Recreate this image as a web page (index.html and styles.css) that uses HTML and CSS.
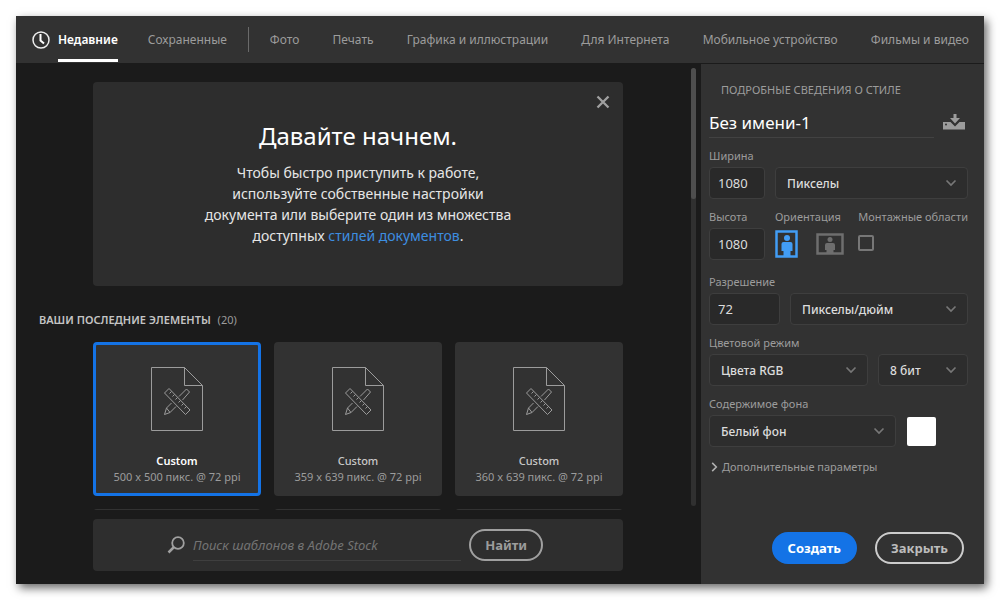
FILE: index.html
```html
<!DOCTYPE html>
<html lang="ru">
<head>
<meta charset="utf-8">
<title>Новый документ</title>
<link rel="stylesheet" href="styles.css">
</head>
<body>
<svg class="sprite" aria-hidden="true">
  <symbol id="chevron" viewBox="0 0 12 8"><path d="M1.500 1.500 6 6l4.500-4.500" fill="none" stroke="currentColor" stroke-width="1.700"/></symbol>
  <symbol id="custom-doc" viewBox="0 0 52 64">
    <g fill="none" stroke="currentColor">
      <path d="M.5 .5H33.500L51.500 18.500V63.500H.5Z M33.500 .5V18.500H51.500"/>
      <path d="M20.500 36 15.500 41 13.500 47.500 19 45.500 25 39.500 M28 29.500 35.500 22 38.500 25 31.500 33 M15.500 41 19 45.500"/>
      <path d="M18 21.500 39 43 34.500 47.500 13.500 26Z M20.500 24.500 18.500 26.500 M23.500 27.500 21.500 29.500 M26.500 30.500 24.500 32.500 M29.500 33.500 27.500 35.500 M32.500 36.500 30.500 38.500 M35.500 39.500 33.500 41.500"/>
    </g>
  </symbol>
</svg>

<div class="window">
  <header class="topbar">
    <svg class="clock" viewBox="0 0 18 18" aria-hidden="true"><circle cx="9" cy="9" r="8" fill="none" stroke="#eee" stroke-width="1.500"/><path d="M8.500 3V9.500L12 12.500" fill="none" stroke="#fff" stroke-width="2"/></svg>
    <nav class="tabs">
      <div class="tab-group">
        <a class="tab active" href="#recent">Недавние</a>
        <a class="tab" href="#saved">Сохраненные</a>
      </div>
      <div class="tab-group presets">
        <a class="tab" href="#photo">Фото</a>
        <a class="tab" href="#print">Печать</a>
        <a class="tab" href="#art">Графика и иллюстрации</a>
        <a class="tab" href="#web">Для Интернета</a>
        <a class="tab" href="#mobile">Мобильное устройство</a>
        <a class="tab" href="#film">Фильмы и видео</a>
      </div>
    </nav>
  </header>

  <div class="body">
    <main class="main">
      <div class="scroll-row">
        <div class="scroll-content">
          <section class="welcome">
            <button class="close" type="button" aria-label="Скрыть"><svg viewBox="0 0 14 14"><path d="M1.500 1.500 12.500 12.500M12.500 1.500 1.500 12.500" stroke="currentColor" stroke-width="2.300"/></svg></button>
            <h1>Давайте начнем.</h1>
            <p>Чтобы быстро приступить к работе,<br>используйте собственные настройки<br>документа или выберите один из множества<br>доступных <a href="#styles">стилей документов</a>.</p>
          </section>
          <h2 class="recent-title">ВАШИ ПОСЛЕДНИЕ ЭЛЕМЕНТЫ <span>(20)</span></h2>
          <div class="cards">
            <button type="button" class="card selected"><svg><use href="#custom-doc"/></svg><strong>Custom</strong><span>500 x 500 пикс. @ 72 ppi</span></button>
            <button type="button" class="card"><svg><use href="#custom-doc"/></svg><strong>Custom</strong><span>359 x 639 пикс. @ 72 ppi</span></button>
            <button type="button" class="card"><svg><use href="#custom-doc"/></svg><strong>Custom</strong><span>360 x 639 пикс. @ 72 ppi</span></button>
            <div class="card next"></div><div class="card next"></div><div class="card next"></div>
          </div>
        </div>
        <div class="scrollbar"><div class="thumb"></div></div>
      </div>
      <form class="search">
        <svg viewBox="0 0 18 18" aria-hidden="true"><circle cx="11" cy="7" r="5.800" fill="none" stroke="currentColor" stroke-width="1.800"/><path d="M7 11 1.500 16.500" stroke="currentColor" stroke-width="2.500"/></svg>
        <input type="text" placeholder="Поиск шаблонов в Adobe Stock" aria-label="Поиск шаблонов в Adobe Stock">
        <button type="button" class="pill">Найти</button>
      </form>
    </main>

    <aside class="details">
      <h2>ПОДРОБНЫЕ СВЕДЕНИЯ О СТИЛЕ</h2>
      <div class="name-row">
        <input type="text" value="Без имени-1" aria-label="Имя">
        <button type="button" class="save" aria-label="Сохранить стиль"><svg viewBox="0 0 22 16"><path d="M0 8H7.500L12 12.500 16.500 8H22V15.500H0Z" fill="currentColor"/><path d="M10.500 0h3v4H17l-5 5.500L7 4h3.500Z" fill="currentColor"/><circle cx="3" cy="10.500" r="1" fill="#323232"/></svg></button>
      </div>

      <div class="row size">
        <div class="field"><label for="width">Ширина</label><input id="width" type="text" value="1080"></div>
        <div class="field grow"><div class="select"><select aria-label="Единицы"><option>Пикселы</option></select><svg><use href="#chevron"/></svg></div></div>
      </div>

      <div class="row size second">
        <div class="field"><label for="height">Высота</label><input id="height" type="text" value="1080"></div>
        <div class="field orientation">
          <span class="label">Ориентация</span>
          <div class="orient">
            <button type="button" class="on" aria-label="Книжная"><svg width="24" height="28" viewBox="0 0 24 28"><rect x="1.500" y="1.500" width="20" height="25" fill="none" stroke="currentColor" stroke-width="2.500"/><circle cx="12" cy="8" r="3" fill="currentColor"/><path d="M8.500 12h7q2 0 2 2v7H15.500v5h-7v-5H6.500v-7q0-2 2-2Z" fill="currentColor"/></svg></button>
            <button type="button" aria-label="Альбомная"><svg width="28" height="22" viewBox="0 0 28 22"><rect x="1.500" y="1.500" width="25" height="19" fill="none" stroke="currentColor" stroke-width="2.500"/><circle cx="14" cy="6.500" r="2.500" fill="currentColor"/><path d="M11 10h6q2 0 2 2v5H17.500v4h-7v-4H9v-5q0-2 2-2Z" fill="currentColor"/></svg></button>
          </div>
        </div>
        <div class="field"><label for="artboards">Монтажные области</label><div class="check"><input id="artboards" type="checkbox"></div></div>
      </div>

      <div class="row resolution">
        <div class="field"><label for="res">Разрешение</label><input id="res" type="text" value="72"></div>
        <div class="field grow"><div class="select"><select aria-label="Единицы разрешения"><option>Пикселы/дюйм</option></select><svg><use href="#chevron"/></svg></div></div>
      </div>

      <div class="row">
        <div class="field grow"><label for="mode">Цветовой режим</label><div class="select"><select id="mode"><option>Цвета RGB</option></select><svg><use href="#chevron"/></svg></div></div>
        <div class="field depth"><div class="select"><select aria-label="Глубина цвета"><option>8 бит</option></select><svg><use href="#chevron"/></svg></div></div>
      </div>

      <div class="row background">
        <div class="field grow"><label for="bg">Содержимое фона</label><div class="select"><select id="bg"><option>Белый фон</option></select><svg><use href="#chevron"/></svg></div></div>
        <button type="button" class="swatch" aria-label="Цвет фона"></button>
      </div>

      <button type="button" class="more"><svg><use href="#chevron"/></svg>Дополнительные параметры</button>

      <div class="actions">
        <button type="button" class="pill primary">Создать</button>
        <button type="button" class="pill">Закрыть</button>
      </div>
    </aside>
  </div>
</div>
</body>
</html>
```
FILE: styles.css
```css
* { box-sizing: border-box; }

body {
  margin: 0;
  padding: 16px;
  background: #fff;
  color: #9c9c9c;
  font-family: "Noto Sans", sans-serif;
  font-size: 12px;
  line-height: 16px;
}

button, input, select { font: inherit; color: inherit; margin: 0; }
button { padding: 0; border: 0; background: none; cursor: pointer; }
a { text-decoration: none; }
.sprite { display: none; }

.window {
  display: flex;
  flex-direction: column;
  height: calc(100vh - 32px);
  background: #1b1b1b;
  box-shadow: 3px 4px 9px rgba(0, 0, 0, 0.6);
}

/* Top bar */
.topbar {
  display: flex;
  align-items: center;
  gap: 8px;
  height: 47px;
  flex: none;
  margin-bottom: 1px;
  padding: 0 15px 0 16px;
  background: #323232;
}
.clock { width: 18px; height: 18px; flex: none; }
.tabs { display: flex; align-items: center; gap: 21px; flex: 1; align-self: stretch; }
.tab-group { display: flex; align-items: center; gap: 30px; height: 100%; }
.presets {
  flex: 1;
  justify-content: space-between;
  gap: 0;
  height: 25px;
  padding-left: 21px;
  border-left: 1px solid #6a6a6a;
}
.tab { padding-top: 1px; color: #9c9c9c; white-space: nowrap; }
.tab.active {
  display: flex;
  align-items: center;
  height: 100%;
  color: #fff;
  font-weight: 600;
  box-shadow: inset 0 -1px #323232, inset 0 -4px #fff;
}

.body { display: flex; flex: 1; min-height: 0; }

/* Main column */
.main { display: flex; flex-direction: column; flex: 1; min-width: 0; padding: 4px 5px 13px 23px; }
.scroll-row { display: flex; flex: 1; min-height: 0; }
.scroll-content {
  flex: 1;
  height: calc(100% + 4px);
  overflow: hidden;
  padding: 14px 68px 0 0;
}
.scrollbar { width: 5px; border-radius: 3px; background: #303030; }
.thumb { height: 30%; border-radius: 3px; background: #4e4e4e; }

.welcome {
  position: relative;
  margin-left: 54px;
  padding: 38px 0 40px;
  border-radius: 4px;
  background: #2d2d2d;
  color: #e6e6e6;
  text-align: center;
}
.welcome h1 { margin: 0 0 10px; color: #fff; font-size: 24px; font-weight: 400; line-height: 32px; }
.welcome p { margin: 0; font-size: 14px; line-height: 21px; }
.welcome a { color: #3d8ee0; }
.close { position: absolute; top: 13px; right: 13px; width: 14px; height: 14px; color: #a0a0a0; }
.close svg { display: block; }

.recent-title { margin: 26px 0 14px; color: #c4c4c4; font-size: 11px; font-weight: 600; line-height: 16px; }
.recent-title span { margin-left: 4px; color: #9c9c9c; font-weight: 400; }

.cards { display: grid; grid-template-columns: repeat(3, 1fr); gap: 13px; margin-left: 54px; }
.card {
  display: flex;
  flex-direction: column;
  align-items: center;
  height: 154px;
  padding: 22px 0 0;
  border: 3px solid #323232;
  border-radius: 4px;
  background: #323232;
  font-size: 11px;
}
.card svg { width: 52px; height: 64px; margin-bottom: 22px; }
.card strong { color: #c8c8c8; font-weight: 500; }
.card.selected { border-color: #1473e6; }
.card.selected strong { color: #fff; font-weight: 600; }

.search {
  display: flex;
  align-items: center;
  height: 52px;
  flex: none;
  margin: 13px 73px 0 54px;
  padding: 0 80px 0 74px;
  border-radius: 4px;
  background: #2e2e2e;
}
.search svg { width: 18px; height: 18px; flex: none; color: #a0a0a0; }
.search input {
  flex: 1;
  min-width: 0;
  height: 32px;
  margin: 0 8px;
  padding: 0;
  border: 0;
  border-bottom: 1px solid #3f3f3f;
  background: none;
  font-size: 13px;
  font-style: italic;
}
.search input::placeholder { color: #747474; opacity: 1; }

.pill {
  height: 32px;
  padding: 0 14px;
  border: 2px solid #a0a0a0;
  border-radius: 16px;
  font-size: 13px;
  font-weight: 700;
}

/* Details panel */
.details { display: flex; flex-direction: column; width: 283px; flex: none; padding: 18px 16px 20px 8px; background: #323232; }
.details h2 { margin: 0 12px 12px; font-size: 11px; font-weight: 400; line-height: 16px; }
.name-row { display: flex; gap: 9px; margin-bottom: 10px; }
.name-row input {
  flex: 1;
  min-width: 0;
  height: 28px;
  padding: 0 0 2px;
  border: 0;
  border-bottom: 1px solid #424242;
  background: none;
  color: #fff;
  font-size: 17px;
}
.save { width: 22px; height: 16px; margin: 4px 3px 0 0; }
.save svg { display: block; }

.row { display: flex; align-items: flex-end; gap: 10px; margin-bottom: 10px; }
.field { display: flex; flex-direction: column; gap: 3px; font-size: 11px; }
.field label, .field .label { white-space: nowrap; }
.grow { flex: 1; min-width: 0; }
.field input[type="text"], .select {
  height: 32px;
  border: 1px solid #3e3e3e;
  border-radius: 4px;
  background: #292929;
  color: #dcdcdc;
  font-size: 13px;
}
.field input[type="text"] { width: 56px; padding: 0 8px; }
.resolution input[type="text"] { width: 71px; }
.second { margin-bottom: 14px; }
.depth { width: 90px; }

.select { display: grid; align-items: center; background: #2d2d2d; font-size: 12px; font-weight: 500; }
.select > * { grid-area: 1 / 1; }
.select select { width: 100%; height: 100%; padding: 1px 30px 0 11px; border: 0; background: none; appearance: none; }
.select svg { justify-self: end; width: 12px; height: 8px; margin-right: 10px; color: #777; pointer-events: none; }

.orientation { width: 74px; }
.orient { display: flex; align-items: center; gap: 17px; height: 32px; color: #6e6e6e; }
.orient svg { display: block; }
.orient .on { color: #429df5; }
.check { display: flex; height: 32px; padding-top: 7px; }
.check input { width: 16px; height: 16px; border: 2px solid #777; border-radius: 2px; appearance: none; }

.background { gap: 11px; margin-bottom: 12px; }
.swatch { width: 29px; height: 29px; margin: 0 32px 1px 0; border-radius: 2px; background: #fff; }

.more { display: flex; align-items: center; gap: 2px; align-self: flex-start; font-size: 11px; }
.more svg { width: 11px; height: 8px; color: #b0b0b0; transform: rotate(-90deg); }

.actions { display: flex; justify-content: flex-end; gap: 18px; margin: auto 4px 0 0; }
.actions .pill { border-color: #ccc; color: #bcbcbc; }
.actions .primary { border-color: #1473e6; background: #1473e6; color: #fff; }
```
